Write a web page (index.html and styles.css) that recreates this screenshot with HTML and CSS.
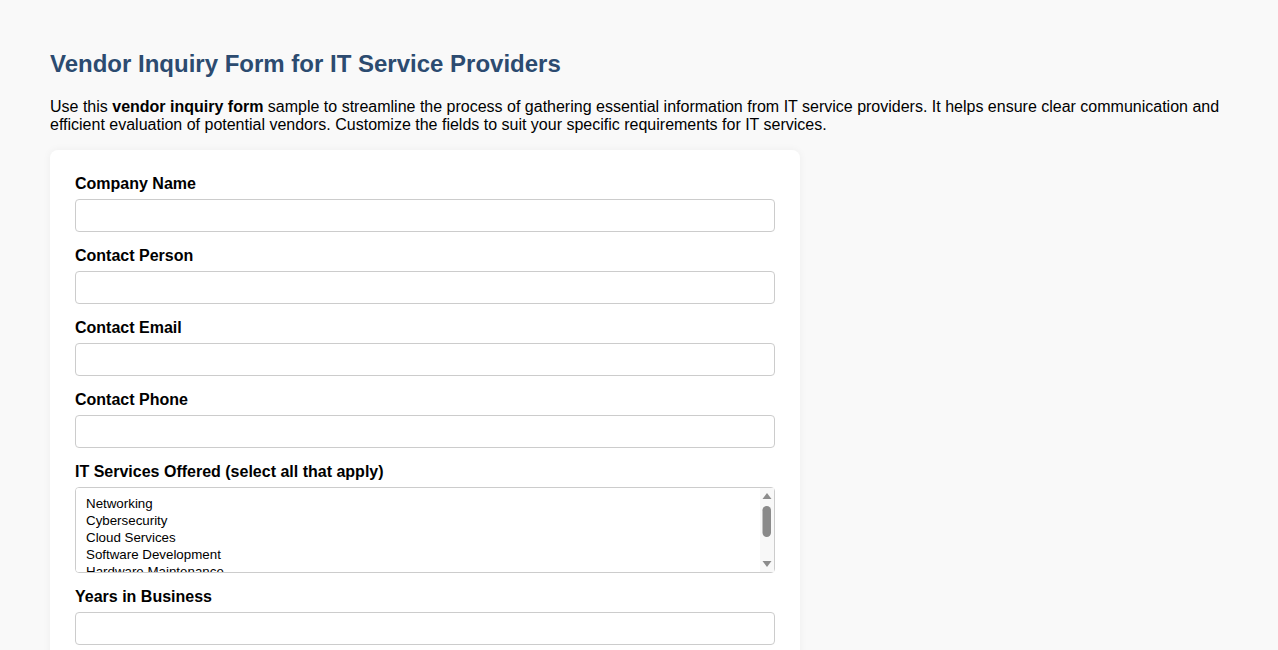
FILE: index.html
```html
<!DOCTYPE html>
<html>
<head>
<meta charset="utf-8">
<title>Vendor Inquiry Form</title>
<link rel="stylesheet" href="styles.css">
</head>
<body>
<div class="page">
  <h1 class="title">Vendor Inquiry Form for IT Service Providers</h1>
  <p class="intro">Use this <strong>vendor inquiry form</strong> sample to streamline the process of gathering essential information from IT service providers. It helps ensure clear communication and efficient evaluation of potential vendors. Customize the fields to suit your specific requirements for IT services.</p>
  <form class="card">
    <label class="label" for="company">Company Name</label>
    <input class="field" id="company" type="text">
    <label class="label" for="person">Contact Person</label>
    <input class="field" id="person" type="text">
    <label class="label" for="email">Contact Email</label>
    <input class="field" id="email" type="email">
    <label class="label" for="phone">Contact Phone</label>
    <input class="field" id="phone" type="tel">
    <label class="label" for="services">IT Services Offered (select all that apply)</label>
    <div class="multi-wrap">
      <select class="multi" id="services" multiple>
        <option>Networking</option>
        <option>Cybersecurity</option>
        <option>Cloud Services</option>
        <option>Software Development</option>
        <option>Hardware Maintenance</option>
        <option>IT Consulting</option>
        <option>Help Desk Support</option>
        <option>Data Management</option>
      </select>
      <svg class="scrollbar" width="14" height="84" viewBox="0 0 14 84" aria-hidden="true">
        <rect x="0" y="0" width="14" height="84" fill="#f8f8f8"/>
        <path d="M2.5 11 L7 5 L11.5 11 Z" fill="#8c8c8c"/>
        <rect x="2.5" y="18" width="8.5" height="31" rx="4.2" fill="#8a8a8a"/>
        <path d="M2.5 73 L7 79 L11.5 73 Z" fill="#8c8c8c"/>
      </svg>
    </div>
    <label class="label" for="years">Years in Business</label>
    <input class="field" id="years" type="number">
  </form>
</div>
</body>
</html>
```

FILE: styles.css
```css
html, body {
  margin: 0;
  padding: 0;
  background: #f9f9f9;
}
body {
  font-family: "Liberation Sans", Arial, sans-serif;
  font-size: 16px;
  color: #000;
}
.page {
  padding: 50px 50px 40px 50px;
}
.title {
  margin: 0 0 20px 0;
  font-size: 24px;
  line-height: 28px;
  color: #2c4b70;
  font-weight: bold;
}
.intro {
  margin: 0 0 16px 0;
  line-height: 18px;
}
.card {
  display: flex;
  flex-direction: column;
  width: 700px;
  padding: 25px;
  background: #fff;
  border-radius: 8px;
  box-shadow: 0 0 8px rgba(0, 0, 0, 0.05);
}
.label {
  display: block;
  font-weight: bold;
  line-height: 18px;
  margin-bottom: 6px;
}
.field {
  box-sizing: border-box;
  width: 700px;
  height: 33px;
  border: 1px solid #ccc;
  border-radius: 4px;
  margin: 0 0 15px 0;
  padding: 0 10px;
  font-family: "Liberation Sans", Arial, sans-serif;
  font-size: 14px;
  background: #fff;
}
.multi-wrap {
  position: relative;
  width: 700px;
  height: 86px;
  margin: 0 0 15px 0;
}
.multi {
  box-sizing: border-box;
  display: block;
  width: 700px;
  height: 86px;
  margin: 0;
  border: 1px solid #ccc;
  border-radius: 4px;
  padding: 8px 0 0 10px;
  font-family: "Liberation Sans", Arial, sans-serif;
  font-size: 13.33px;
  background: #fff;
  overflow-y: scroll;
}
.multi option {
  padding: 0 0 1px 0;
}
.scrollbar {
  position: absolute;
  top: 1px;
  right: 1px;
  display: block;
}
```
